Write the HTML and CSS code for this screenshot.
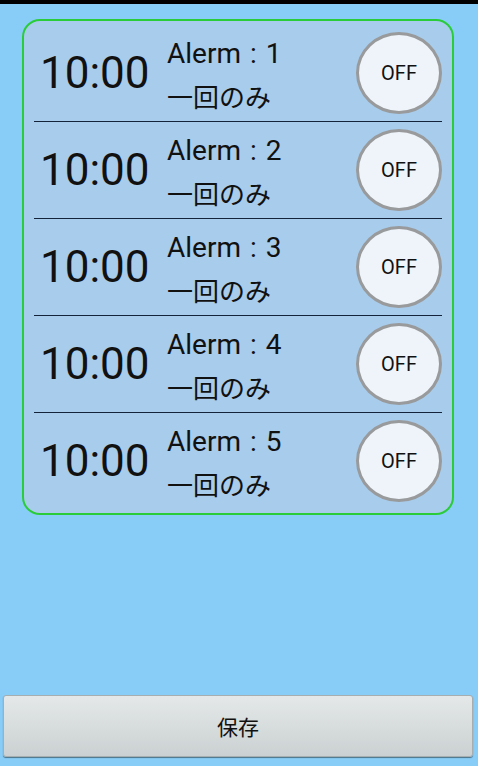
FILE: index.html
```html
<!DOCTYPE html>
<html lang="ja">
<head>
    <meta charset="UTF-8">
    <meta name="viewport" content="width=device-width, initial-scale=1.0">
    <title>Alerm</title>
    <link rel="stylesheet" href="styles.css">
</head>
<body>
    <div class="screen">
        <div class="topbar"></div>

        <div class="card">
            <div class="row">
                <div class="time">10:00</div>
                <div class="info">
                    <div class="name">Alerm : 1</div>
                    <div class="repeat">一回のみ</div>
                </div>
                <button class="toggle">OFF</button>
            </div>
            <div class="row">
                <div class="time">10:00</div>
                <div class="info">
                    <div class="name">Alerm : 2</div>
                    <div class="repeat">一回のみ</div>
                </div>
                <button class="toggle">OFF</button>
            </div>
            <div class="row">
                <div class="time">10:00</div>
                <div class="info">
                    <div class="name">Alerm : 3</div>
                    <div class="repeat">一回のみ</div>
                </div>
                <button class="toggle">OFF</button>
            </div>
            <div class="row">
                <div class="time">10:00</div>
                <div class="info">
                    <div class="name">Alerm : 4</div>
                    <div class="repeat">一回のみ</div>
                </div>
                <button class="toggle">OFF</button>
            </div>
            <div class="row">
                <div class="time">10:00</div>
                <div class="info">
                    <div class="name">Alerm : 5</div>
                    <div class="repeat">一回のみ</div>
                </div>
                <button class="toggle">OFF</button>
            </div>
        </div>

        <div class="spacer"></div>

        <button class="save">保存</button>
    </div>
</body>
</html>
```

FILE: styles.css
```css
body {
    margin: 0;
    font-family: Roboto, "Noto Sans CJK JP", sans-serif;
    color: #111;
    background-color: #88cdf7;
}
.screen {
    display: flex;
    flex-direction: column;
    height: 766px;
}
.topbar {
    height: 4px;
    background: #000;
}
.card {
    margin: 15px 24px 0 22px;
    padding: 4px 10px;
    background: #a8ccec;
    border: 2px solid #2bcc3a;
    border-radius: 18px;
}
.row {
    display: flex;
    align-items: center;
    height: 96px;
    padding-left: 6px;
    border-bottom: 1px solid #14233a;
}
.row:last-child {
    border-bottom: none;
}
.time {
    font-size: 44px;
    line-height: 52px;
    width: 110px;
}
.info {
    align-self: flex-start;
    padding-top: 12px;
    margin-left: 17px;
    flex: 1;
}
.name {
    font-size: 28px;
    line-height: 33px;
    word-spacing: 2px;
}
.repeat {
    font-size: 26px;
    line-height: 30px;
    margin-top: 13px;
}
.toggle {
    width: 86px;
    height: 82px;
    border-radius: 50%;
    border: 3px solid #989a9b;
    background: #eef4fa;
    font-family: Roboto, sans-serif;
    font-size: 20px;
    color: #111;
    padding: 0;
}
.spacer {
    flex: 1;
}
.save {
    height: 62px;
    margin: 0 5px 9px 3px;
    border: 1px solid #a7aeb0;
    border-radius: 3px;
    background: linear-gradient(#e4e8e8, #cbd1d2);
    box-shadow: 0 1px 1px rgba(0, 0, 0, 0.45);
    font-family: "Noto Sans CJK JP", sans-serif;
    font-size: 21px;
    color: #111;
}
```
